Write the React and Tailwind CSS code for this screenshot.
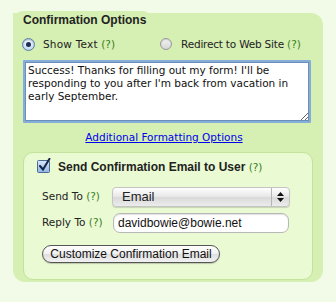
import React from "react";

const Help = () => <span className="font-['DejaVu_Sans',sans-serif] text-[10.5px] font-normal tracking-normal text-[#3a7d1e]">(?)</span>;

const Radio = ({ checked }) =>
  checked ? (
    <span className="flex h-[13px] w-[13px] items-center justify-center rounded-full border border-[#5d7ea8] bg-[radial-gradient(circle_at_50%_40%,#ffffff,#a9c9ec)] shadow-[inset_0_1px_1px_rgba(0,0,0,0.2)]">
      <span className="h-[5px] w-[5px] rounded-full bg-[#1c2e55]" />
    </span>
  ) : (
    <span className="h-[12px] w-[12px] rounded-full border border-[#9a9a9a] bg-[linear-gradient(#f4f4f4,#d6d6d6)] shadow-[inset_0_1px_1px_rgba(0,0,0,0.15)]" />
  );

const Check = () => (
  <svg width="14" height="15" viewBox="0 0 14 15">
    <defs>
      <linearGradient id="cb" x1="0" y1="0" x2="0" y2="1">
        <stop offset="0" stopColor="#dbe9f9" />
        <stop offset="1" stopColor="#8fb6e3" />
      </linearGradient>
    </defs>
    <rect x="0.5" y="2.5" width="12" height="12" rx="1" fill="url(#cb)" stroke="#4d6b94" />
    <path d="M3 8 L6 11.5 L12.5 0.8" fill="none" stroke="#172546" strokeWidth="2" strokeLinecap="round" />
  </svg>
);

export default function App() {
  return (
    <div className="min-h-[302px] bg-[#f2fbe8] pl-[13px] pt-[11px] font-['DejaVu_Sans',sans-serif] text-[10.5px] text-[#222]">
      <div className="h-[10px] w-[138px] rounded-tl-[12px] rounded-tr-[10px] bg-[#d6efb3]" />
      <div className="h-[269px] w-[310px] rounded-b-[12px] rounded-tr-[12px] bg-[#d6efb3] pl-[10px]">
        <div className="-mt-[8px] h-[14px] font-['Liberation_Sans',Arial,sans-serif] text-[12px] font-bold leading-[14px]">
          Confirmation Options
        </div>

        <div className="mt-[10px] flex h-[14px] items-center leading-[14px]">
          <div className="-ml-px flex items-center">
            <Radio checked />
            <span className="ml-[8px] tracking-[0.2px]">
              Show Text <Help />
            </span>
          </div>
          <div className="ml-[45px] flex items-center">
            <Radio />
            <span className="ml-[9px] tracking-[-0.2px]">
              Redirect to Web Site <Help />
            </span>
          </div>
        </div>

        <textarea
          className="mt-[9px] block h-[63px] w-[288px] resize-y rounded-[1px] border-2 border-[#86acd8] bg-white px-[3px] py-[2px] font-['DejaVu_Sans',sans-serif] text-[10.5px] leading-[13px] text-[#111] shadow-[inset_0_0_0_1px_#6b8fbd] outline-none"
          defaultValue="Success! Thanks for filling out my form! I'll be responding to you after I'm back from vacation in early September."
        />

        <div className="mt-[7px] h-[14px] w-[288px] pr-[6px] text-center leading-[14px]">
          <a href="#" className="text-[#0000ee] underline">
            Additional Formatting Options
          </a>
        </div>

        <div className="mt-[8px] h-[128px] w-[290px] rounded-[10px] border border-[#c3e29b] bg-[#eafad3] pt-[7px]">
          <div className="flex h-[14px] items-center leading-[14px]">
            <span className="ml-[13px] -mt-[3px]">
              <Check />
            </span>
            <span className="ml-[7px] font-['Liberation_Sans',Arial,sans-serif] text-[12px] font-bold">
              Send Confirmation Email to User <Help />
            </span>
          </div>

          <div className="mt-[13px] flex items-center pl-[18px]">
            <span className="w-[70px]">
              Send To <Help />
            </span>
            <div className="flex h-[20px] w-[178px] items-stretch overflow-hidden rounded-[4px] border border-[#c4c4c4] bg-[linear-gradient(#ffffff,#e6e6e6_50%,#d9d9d9_51%,#ececec)] shadow-[0_1px_1px_rgba(0,0,0,0.15)]">
              <span className="flex-1 pl-[9px] font-['Liberation_Sans',Arial,sans-serif] text-[13px] leading-[18px]">Email</span>
              <span className="flex w-[18px] flex-col items-center justify-center gap-[2px] border-l border-[#b5b5b5]">
                <svg width="7" height="4" viewBox="0 0 7 4"><path d="M0 4 L3.5 0 L7 4 Z" fill="#111" /></svg>
                <svg width="7" height="4" viewBox="0 0 7 4"><path d="M0 0 L3.5 4 L7 0 Z" fill="#111" /></svg>
              </span>
            </div>
          </div>

          <div className="mt-[6px] flex items-center pl-[18px]">
            <span className="w-[71px]">
              Reply To <Help />
            </span>
            <div className="flex h-[20px] w-[176px] items-center rounded-[7px] border border-[#b8b8b8] bg-white pl-[4px] font-['Liberation_Sans',Arial,sans-serif] text-[12px] text-[#111] shadow-[inset_0_1px_1px_rgba(0,0,0,0.12)]">
              davidbowie@bowie.net
            </div>
          </div>

          <div className="mt-[12px] pl-[18px]">
            <button className="flex h-[18px] w-[178px] items-center justify-center rounded-full border border-[#555] bg-[linear-gradient(#ffffff,#f0f0f0_50%,#dedede_51%,#f2f2f2)] font-['Liberation_Sans',Arial,sans-serif] text-[12px] text-[#111] shadow-[0_1px_1px_rgba(0,0,0,0.2)]">
              Customize Confirmation Email
            </button>
          </div>
        </div>
      </div>
    </div>
  );
}
